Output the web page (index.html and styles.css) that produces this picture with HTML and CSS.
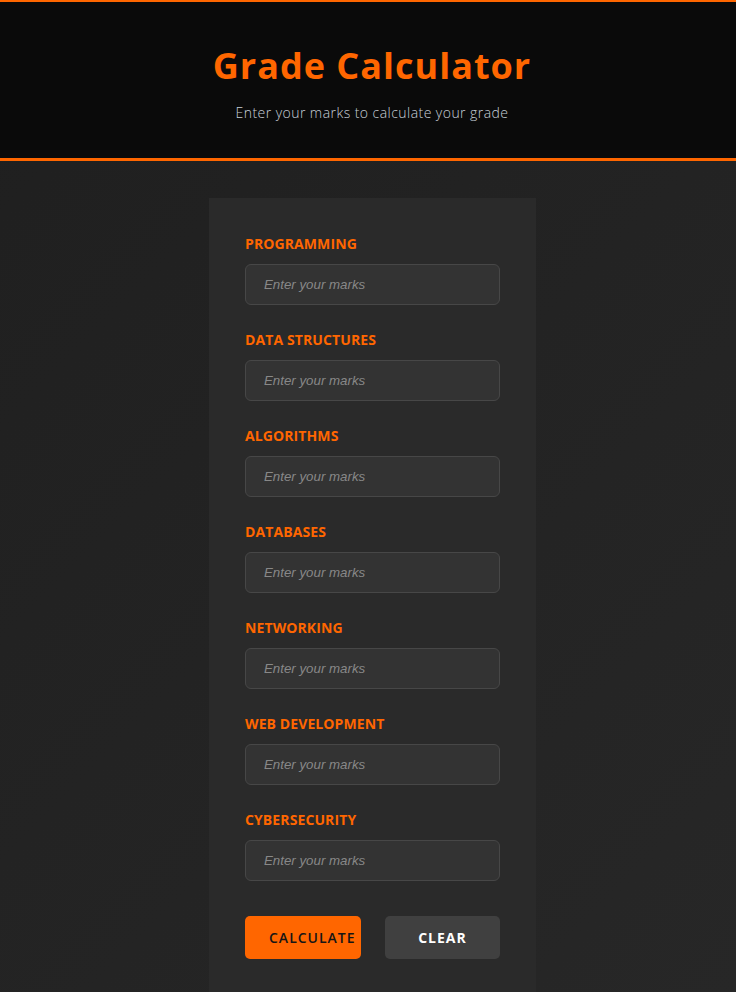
FILE: index.html
```html
<!DOCTYPE html>
<html lang="en">
<head>
<meta charset="utf-8">
<title>Grade Calculator</title>
<link rel="stylesheet" href="styles.css">
</head>
<body>
<header class="header">
  <h1 class="title">Grade Calculator</h1>
  <p class="subtitle">Enter your marks to calculate your grade</p>
</header>
<main class="main">
  <form class="card">
    <div class="group"><label class="label">PROGRAMMING</label><input class="input" type="text" placeholder="Enter your marks"></div>
    <div class="group"><label class="label">DATA STRUCTURES</label><input class="input" type="text" placeholder="Enter your marks"></div>
    <div class="group"><label class="label">ALGORITHMS</label><input class="input" type="text" placeholder="Enter your marks"></div>
    <div class="group"><label class="label">DATABASES</label><input class="input" type="text" placeholder="Enter your marks"></div>
    <div class="group"><label class="label">NETWORKING</label><input class="input" type="text" placeholder="Enter your marks"></div>
    <div class="group"><label class="label">WEB DEVELOPMENT</label><input class="input" type="text" placeholder="Enter your marks"></div>
    <div class="group"><label class="label">CYBERSECURITY</label><input class="input" type="text" placeholder="Enter your marks"></div>
    <div class="buttons">
      <button type="button" class="btn btn-calc">CALCULATE</button>
      <button type="button" class="btn btn-clear">CLEAR</button>
    </div>
  </form>
</main>
</body>
</html>
```
FILE: styles.css
```css
html, body {
  margin: 0;
  padding: 0;
}
body {
  min-height: 100vh;
  background: linear-gradient(135deg, #1f1f1f 0%, #272727 100%);
  font-family: "Open Sans", "Liberation Sans", sans-serif;
  overflow: hidden;
}
.header {
  background: #0a0a0a;
  border-top: 2px solid #ff6600;
  border-bottom: 3px solid #ff6600;
  box-sizing: border-box;
  height: 161px;
  text-align: center;
  padding-top: 40px;
}
.title {
  margin: 0;
  color: #ff6600;
  font-family: "Open Sans", sans-serif;
  font-weight: 700;
  font-size: 36px;
  line-height: 48px;
  letter-spacing: 1px;
  padding-left: 8px;
}
.subtitle {
  margin: 14px 0 0;
  color: #c8d0d8;
  font-family: "Open Sans", sans-serif;
  font-weight: 300;
  font-size: 14px;
  line-height: 18px;
  letter-spacing: 0.45px;
  padding-left: 8px;
}
.main {
  display: flex;
  justify-content: center;
  padding-top: 37px;
}
.card {
  width: 327px;
  box-sizing: border-box;
  background: #2a2a2a;
  padding: 36px 36px 36px;
  margin-left: 9px;
}
.group {
  display: flex;
  flex-direction: column;
  margin-bottom: 25px;
}
.label {
  display: block;
  color: #ff6600;
  font-family: "Open Sans", sans-serif;
  font-weight: 700;
  font-size: 14px;
  line-height: 20px;
  letter-spacing: 0.1px;
  margin-bottom: 10px;
}
.input {
  box-sizing: border-box;
  width: 255px;
  height: 41px;
  background: #333333;
  border: 1px solid #474747;
  border-radius: 6px;
  padding: 0 18px;
  color: #ddd;
  font-family: "Liberation Sans", Arial, sans-serif;
  font-size: 13.3px;
  outline: none;
}
.input::placeholder {
  color: #888888;
  font-style: italic;
}
.buttons {
  display: flex;
  gap: 24px;
  margin-top: 35px;
}
.btn {
  height: 43px;
  border: none;
  border-radius: 5px;
  font-family: "Open Sans", sans-serif;
  font-weight: 600;
  font-size: 14px;
  letter-spacing: 1px;
  cursor: pointer;
}
.btn-calc {
  width: 116px;
  background: #ff6600;
  color: #151515;
  text-align: left;
  padding-left: 24px;
}
.btn-clear {
  width: 115px;
  background: #404040;
  color: #ffffff;
  font-weight: 700;
}
```
